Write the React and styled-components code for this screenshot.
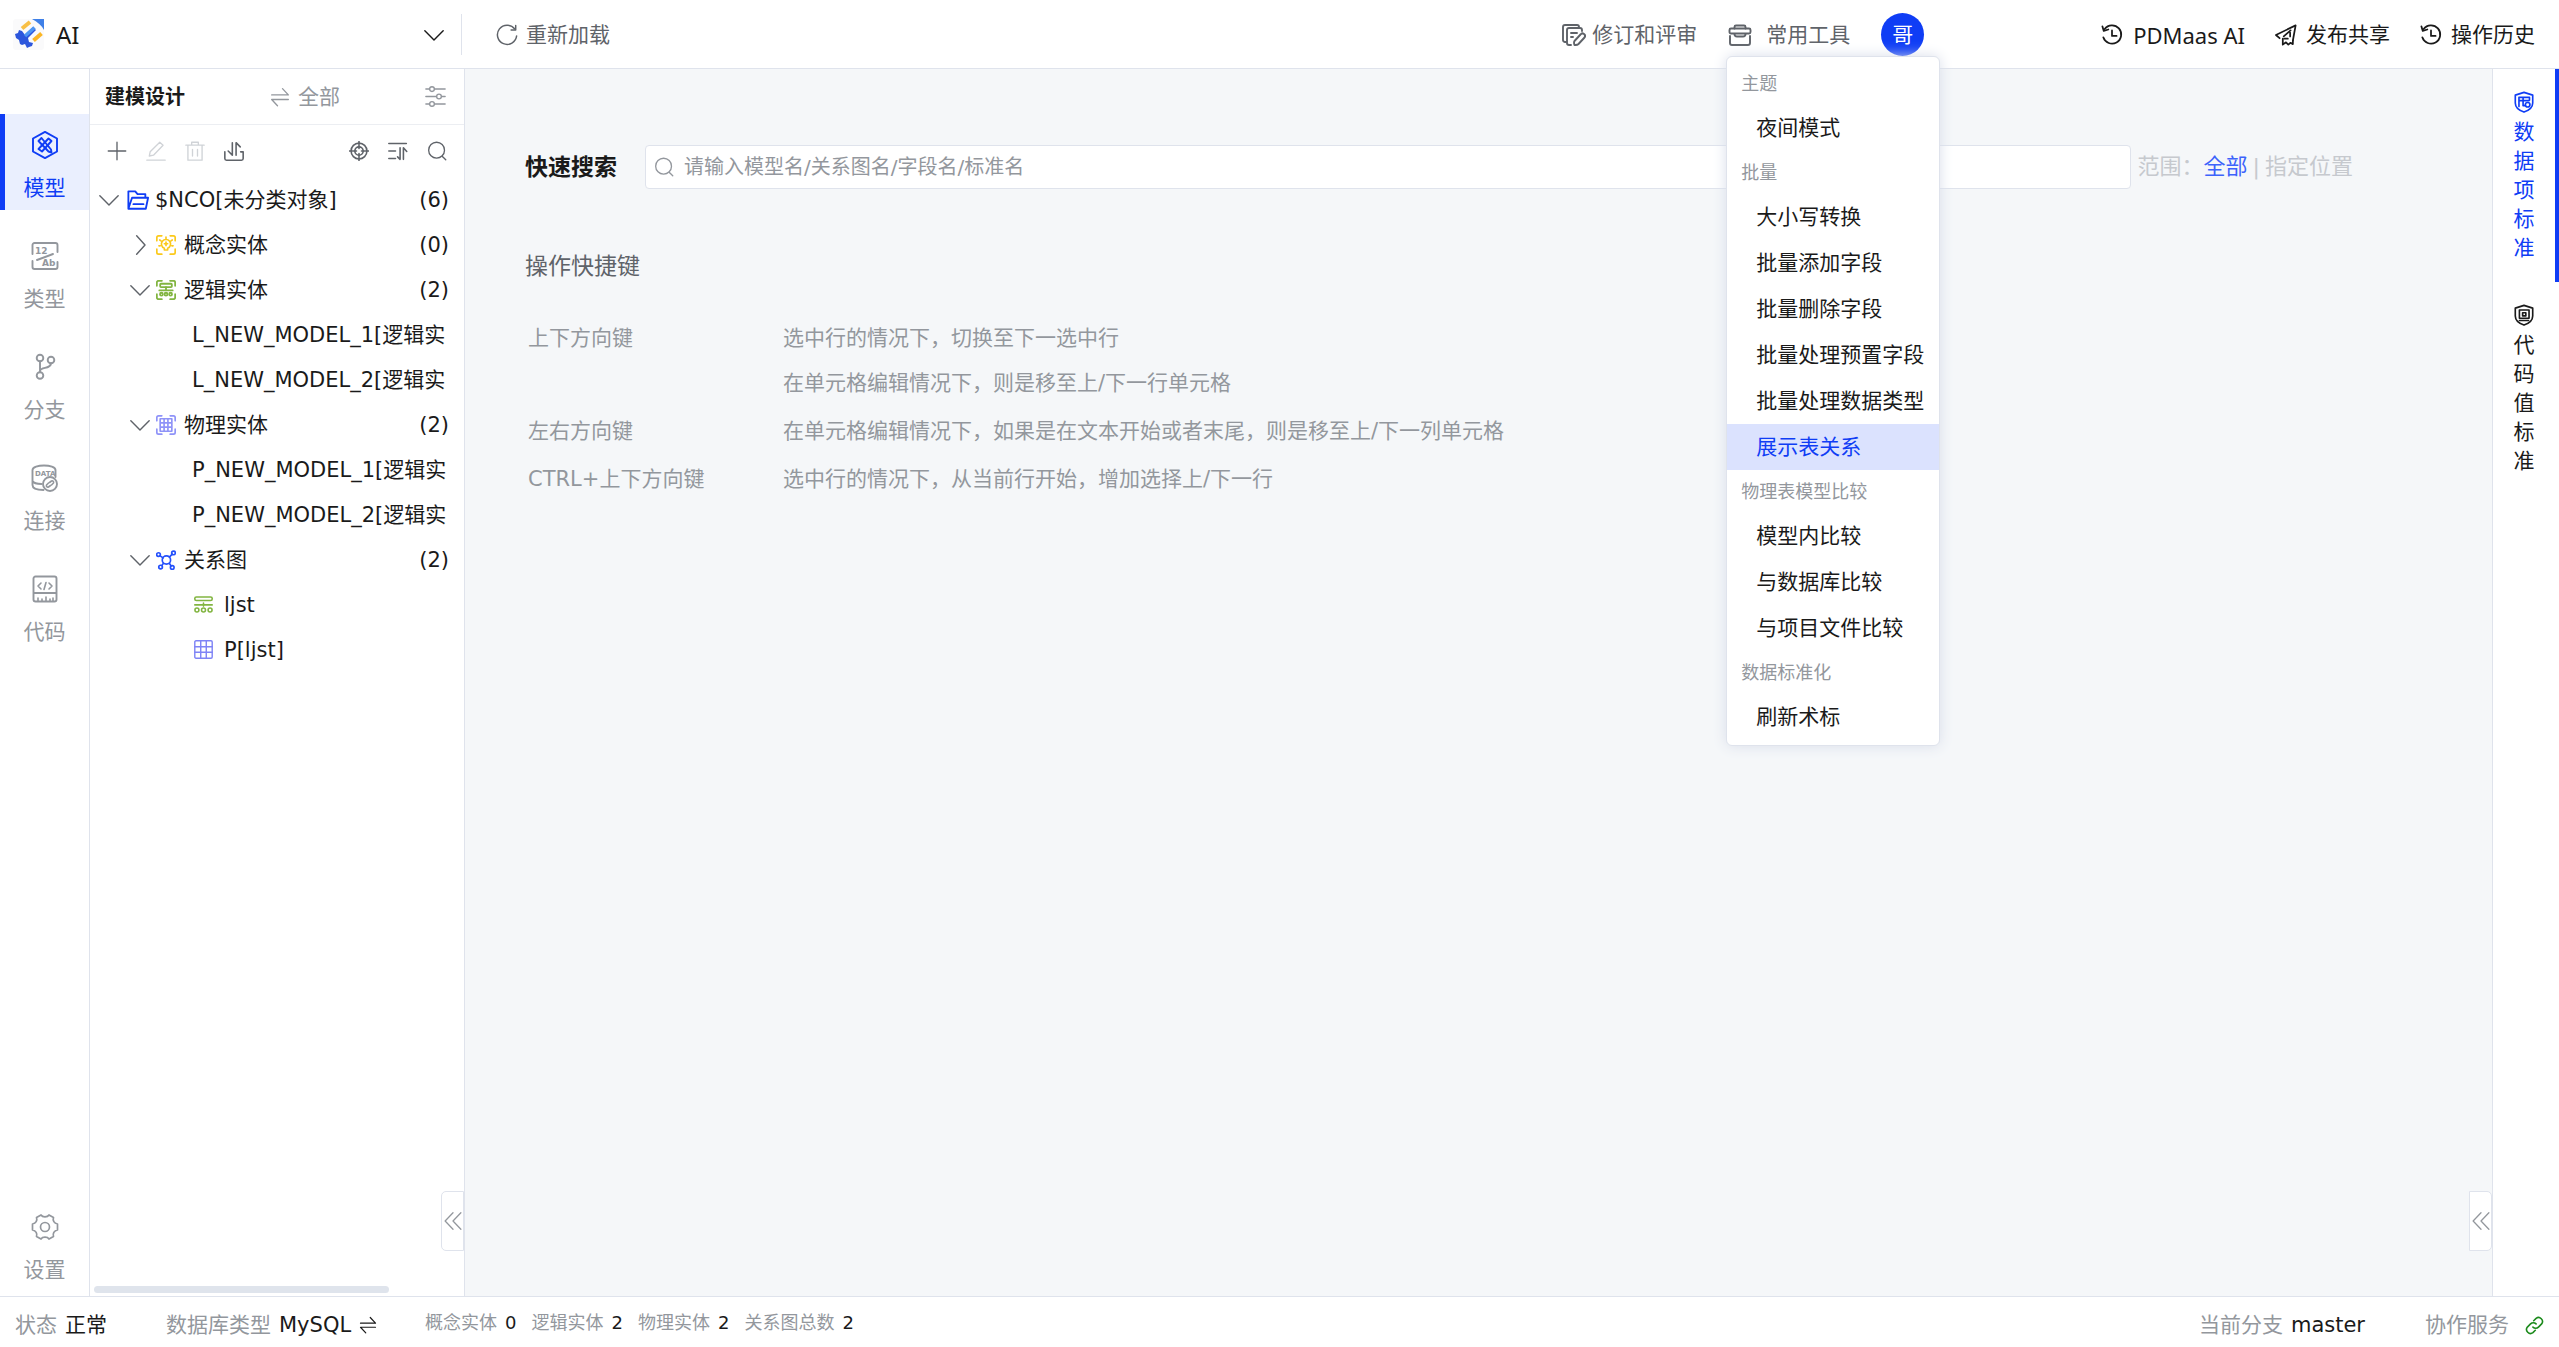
import { useState } from "react"
import styled, { createGlobalStyle } from "styled-components"

const BLUE = "#0f3df5"
const LINE = "#dfe3ec"
const GREY = "#93979d"
const DARK = "#5f6369"
const INK = "#1a1a1a"

const GlobalStyle = createGlobalStyle`
    * {
        box-sizing: border-box;
    }
    body {
        margin: 0;
        color: ${INK};
        font-family: "DejaVu Sans", "Noto Sans CJK SC", sans-serif;
        font-size: 21px;
        line-height: 28px;
    }
    button, input {
        font: inherit;
        color: inherit;
    }
    button {
        padding: 0;
        border: 0;
        background: none;
        white-space: nowrap;
        cursor: pointer;
    }
    svg {
        display: block;
        flex: none;
    }
`

const Page = styled.div`
    min-height: 100vh;
    display: flex;
    flex-direction: column;
    background-color: white;
`

/* ---------- header ---------- */

const Header = styled.header`
    display: flex;
    align-items: center;
    height: 69px;
    padding: 1px 24px 0 0;
    border-bottom: 1px solid ${LINE};
`

const Project = styled.button`
    display: flex;
    align-items: center;
    gap: 12px;
    width: 462px;
    height: 41px;
    padding: 0 17px 0 13px;
    border-right: 1px solid ${LINE};
    font-family: "Noto Sans", sans-serif;
    font-size: 24px;
`

const ProjectName = styled.span`
    flex: 1;
    text-align: left;
`

const Action = styled.button`
    display: flex;
    align-items: center;
    gap: ${p => p.$gap || 8}px;
    color: ${p => p.$color || INK};
`

const LatinText = styled.span`
    font-family: "Noto Sans", sans-serif;
    font-size: 22px;
`

const Reload = styled.div`
    flex: 1;
    padding-left: 34px;
`

const HeaderTools = styled.div`
    display: flex;
    align-items: center;
    gap: 31px;
    margin-right: 177px;
`

const HeaderLinks = styled.div`
    display: flex;
    align-items: center;
    gap: 30px;
`

const Avatar = styled.button`
    width: 43px;
    height: 43px;
    border-radius: 50%;
    background-color: ${BLUE};
    color: white;
`

const MenuAnchor = styled.div`
    position: relative;
`

const Menu = styled.div`
    position: absolute;
    top: 35px;
    left: -2px;
    z-index: 10;
    width: 214px;
    padding: 5px 0;
    border: 1px solid ${LINE};
    border-radius: 6px;
    background-color: white;
    box-shadow: 0 0 14px #d9deea;
`

const MenuTitle = styled.div`
    padding-left: 14px;
    font-size: 18px;
    line-height: 43px;
    color: ${GREY};
`

const MenuItem = styled.button`
    display: block;
    width: 100%;
    padding-left: 29px;
    text-align: left;
    line-height: 46px;
    color: ${p => (p.$active ? BLUE : INK)};
    background-color: ${p => (p.$active ? "#dbe2fe" : "transparent")};
`

/* ---------- body ---------- */

const Body = styled.div`
    flex: 1;
    display: flex;
`

const Rail = styled.nav`
    display: flex;
    flex-direction: column;
    gap: 15px;
    width: 90px;
    padding: 45px 0 4px;
    border-right: 1px solid ${LINE};
`

const RailItem = styled.button`
    display: flex;
    flex-direction: column;
    align-items: center;
    gap: 15px;
    height: 96px;
    padding: 17px 5px 0 0;
    border-left: 5px solid ${p => (p.$active ? BLUE : "transparent")};
    background-color: ${p => (p.$active ? "#eaeffe" : "transparent")};
    color: ${p => (p.$active ? BLUE : GREY)};
`

const RailSpacer = styled.div`
    flex: 1;
`

const TreePanel = styled.aside`
    position: relative;
    display: flex;
    flex-direction: column;
    width: 375px;
    border-right: 1px solid ${LINE};
`

const PanelHead = styled.div`
    display: flex;
    align-items: center;
    justify-content: space-between;
    height: 56px;
    padding: 0 18px 0 15px;
    border-bottom: 1px solid #eceef2;
    color: ${GREY};
`

const PanelTitle = styled.h2`
    margin: 0;
    font-size: 20px;
    font-weight: 700;
    color: ${INK};
`

const Toolbar = styled.div`
    display: flex;
    align-items: center;
    gap: 19px;
    height: 52px;
    padding: 0 17px;
    color: ${DARK};
`

const ToolButton = styled.button`
    color: ${p => (p.disabled ? "#d0d3d7" : "inherit")};
    margin-left: ${p => (p.$push ? "auto" : 0)};
`

const Tree = styled.ul`
    flex: 1;
    margin: 0;
    padding: 0 15px 0 0;
    list-style: none;
`

const TreeRow = styled.li`
    display: flex;
    align-items: center;
    height: 45px;
    padding-left: ${p => p.$indent}px;
`

const Arrow = styled.button`
    margin-right: ${p => (p.$root ? 8 : 6)}px;
    color: ${DARK};
`

const TreeName = styled.span`
    flex: 1;
    white-space: nowrap;
    margin-left: ${p => p.$gap}px;
`

const ScrollThumb = styled.div`
    width: 79%;
    height: 7px;
    margin: 0 4px 3px;
    border-radius: 4px;
    background-color: #dfe4ec;
`

const Handle = styled.button`
    position: absolute;
    right: 0;
    bottom: 45px;
    display: flex;
    align-items: center;
    justify-content: center;
    width: 23px;
    height: 60px;
    border: 1px solid ${LINE};
    border-radius: ${p => (p.$flip ? "0 5px 5px 0" : "5px 0 0 5px")};
    background-color: white;
    color: ${GREY};
`

const Main = styled.main`
    position: relative;
    flex: 1;
    padding: 76px 139px 0 60px;
    background-color: #f5f7f9;
`

const SearchRow = styled.div`
    display: flex;
    align-items: center;
    font-size: 23px;
`

const SearchLabel = styled.label`
    width: 120px;
    font-weight: 700;
`

const SearchBox = styled.div`
    flex: 1;
    display: flex;
    align-items: center;
    gap: 10px;
    height: 44px;
    padding: 0 8px;
    border: 1px solid ${LINE};
    border-radius: 4px;
    background-color: white;
    color: ${GREY};
`

const SearchInput = styled.input`
    flex: 1;
    padding: 0;
    border: 0;
    outline: 0;
    background: none;
    font-size: 20px;
    &::placeholder {
        color: ${GREY};
    }
`

const Scope = styled.div`
    display: flex;
    align-items: center;
    padding-left: 7px;
    font-size: 22px;
    color: #c6c9ce;
`

const ScopeDivider = styled.span`
    padding: 0 5px;
`

const ScopeButton = styled.button`
    color: ${p => (p.$active ? "#3d63fb" : "inherit")};
`

const HelpTitle = styled.h3`
    margin: 61px 0 31px;
    font-size: 23px;
    font-weight: 400;
    line-height: 32px;
    color: ${DARK};
`

const HelpTable = styled.table`
    border-spacing: 3px;
    color: ${GREY};
    line-height: 45px;
    th, td {
        padding: 0;
        font-weight: 400;
        text-align: left;
        vertical-align: top;
    }
    th {
        width: 252px;
    }
`

const SideTabs = styled.nav`
    width: 67px;
    border-left: 1px solid ${LINE};
`

const SideTab = styled.button`
    display: flex;
    flex-direction: column;
    align-items: center;
    gap: 5px;
    width: 100%;
    height: 213px;
    padding-top: 22px;
    border-right: 4px solid ${p => (p.$active ? BLUE : "transparent")};
    color: ${p => (p.$active ? BLUE : INK)};
`

const Vertical = styled.span`
    width: 21px;
    line-height: 29px;
    white-space: normal;
    word-break: break-all;
`

/* ---------- footer ---------- */

const Footer = styled.footer`
    display: flex;
    align-items: center;
    height: 51px;
    padding: 6px 15px 0;
    border-top: 1px solid ${LINE};
`

const Stat = styled.span`
    display: flex;
    align-items: center;
    gap: 8px;
    margin-right: ${p => p.$after}px;
    color: ${GREY};
    b {
        font-weight: 400;
        color: ${INK};
    }
`

const SmallStats = styled.div`
    display: flex;
    flex: 1;
    padding-bottom: 5px;
    font-size: 18px;
`

/* ---------- icons ---------- */

function Icon({ size = 22, w = 1.6, box = 24, children, ...rest }) {
    return (
        <svg width={size} height={size} viewBox={`0 0 ${box} ${box}`} fill="none" stroke="currentColor"
            strokeWidth={w} strokeLinecap="round" strokeLinejoin="round" aria-hidden="true" {...rest}>
            {children}
        </svg>
    )
}

const Logo = () => (
    <svg width="31" height="31" viewBox="0 0 31 31" aria-hidden="true">
        <rect width="31" height="31" rx="3" fill="#fafafb" />
        <path d="M19 0h12v11c-2-4-6-8-12-11z" fill="#3f80e8" />
        <path d="M9 9.500l8-6.500" stroke="#f8bf45" strokeWidth="4" />
        <path d="M2 15l3-1 1-3 3 1 3 4 8-8 3 3-8 8 1 4 4 1-1 3-3 1-2 1-2-4-3 1-2-1-1-4-3-2z" fill="#2c56dc" />
        <path d="M12 17l9.500-8.500" stroke="#4c95f3" strokeWidth="3.500" />
        <path d="M20.500 21.500l8-7" stroke="#fbb624" strokeWidth="4" />
    </svg>
)

const ChevronDown = ({ size = 20 }) => (
    <Icon size={size} w={1.7}><path d="M1 7l11 11L23 7" /></Icon>
)
const ChevronRight = () => (
    <Icon size={20} w={1.7}><path d="M8 1l10 11L8 23" /></Icon>
)
const ReloadIcon = () => (
    <Icon><path d="M20.500 5.500A10.500 10.500 0 1 0 22.500 13" /><path d="M21.500 1.500v5h-5" /></Icon>
)
const ReviewIcon = () => (
    <Icon size={24} w={1.900}>
        <path d="M4 19H3a2 2 0 0 1-2-2V4a2 2 0 0 1 2-2h12a2 2 0 0 1 2 2" />
        <path d="M9 22H7a2 2 0 0 1-2-2V7a2 2 0 0 1 2-2h11a2 2 0 0 1 2 2v1" />
        <path d="M9 10h6M9 14h2" />
        <path d="M12.500 18l6-6.500a2.300 2.300 0 0 1 4 3l-6 6.500c-1.500 1.500-3.500 1-4 1-.300-1-1-2.500 0-4z" />
    </Icon>
)
const ToolboxIcon = () => (
    <Icon size={24} w={1.900}>
        <path d="M6.500 5.500V4a1.500 1.500 0 0 1 1.500-1.500h8A1.500 1.500 0 0 1 17.500 4v1.500" />
        <rect x="1.500" y="5.500" width="21" height="5" rx="1.500" />
        <path d="M2 13v7a2 2 0 0 0 2 2h16a2 2 0 0 0 2-2v-7" />
        <path d="M6.500 11c0 2 1 2.500 2.500 2.500h6c1.500 0 2.500-.500 2.500-2.500" />
    </Icon>
)
const HistoryIcon = () => (
    <Icon w={1.900}>
        <path d="M4 5.500a10 10 0 1 1-1.500 9" /><path d="M1.500 2.500l1.500 5 5-1.500" /><path d="M12 7v6h5" />
    </Icon>
)
const PlaneIcon = () => (
    <Icon w={1.900}>
        <path d="M5 15.500l-4-3.500L22.500 1.500 19.500 18" />
        <path d="M8.500 16v6.500l3.500-2.500 2.500 2.500 2.500-2 2.500 1.500v-4" />
        <path d="M17 7l-7.500 6.500M16.500 9.500v4M10 16h4" />
    </Icon>
)
const SwapIcon = ({ size = 20 }) => (
    <Icon size={size}><path d="M2 9.500h20L15 2" /><path d="M22 15H2l7 7.500" /></Icon>
)
const SlidersIcon = () => (
    <Icon size={21}>
        <path d="M1 3.500h4M11 3.500h12M1 12h12M19 12h4M1 20.500h4M11 20.500h12" />
        <circle cx="8" cy="3.500" r="2.700" /><circle cx="16" cy="12" r="2.700" /><circle cx="8" cy="20.500" r="2.700" />
    </Icon>
)
const PlusIcon = () => <Icon size={20}><path d="M12 1.500v21M1.500 12h21" /></Icon>
const EditIcon = () => (
    <Icon size={20}><path d="M1 23h22" /><path d="M4 18l1-5L16.500 1.500l4 3.500L9 17z" /></Icon>
)
const TrashIcon = () => (
    <Icon size={20}>
        <path d="M1 5h22M8 5V1.500h8V5M3.500 5v18h17V5M9 10v8M15 10v8" />
    </Icon>
)
const ImportIcon = () => (
    <Icon size={20} w={1.900}>
        <path d="M1 13v8a2 2 0 0 0 2 2h18a2 2 0 0 0 2-2v-8h-3" /><path d="M10 2v15l-5-5M14.500 17V2l5 5" />
    </Icon>
)
const TargetIcon = () => (
    <Icon size={20} w={1.900}>
        <circle cx="12" cy="12" r="9.500" /><circle cx="12" cy="12" r="5" />
        <path d="M12 .500V9M12 15v8.500M.500 12H9M15 12h8.500" />
    </Icon>
)
const SortIcon = () => (
    <Icon size={20} w={1.900}>
        <path d="M1 3h21M1 12h8M1 21h8" /><path d="M14.500 8v14l-3-3M18.500 22V8l4 4.500" />
    </Icon>
)
const SearchIcon = () => (
    <Icon size={20}><circle cx="11.500" cy="11" r="9.500" /><path d="M18.500 18.500l4 4" /></Icon>
)
const DoubleLeft = () => (
    <Icon size={18} w={1.700}><path d="M12 1L1.500 12 12 23M22.500 1L12 12l10.500 11" /></Icon>
)
const LinkIcon = () => (
    <Icon size={19} w={2} color="#1c8a1c">
        <path d="M10 14a5 5 0 0 0 7 0l4-4a5 5 0 0 0-7-7l-3 3" />
        <path d="M14 10a5 5 0 0 0-7 0l-4 4a5 5 0 0 0 7 7l3-3" />
    </Icon>
)
const FolderIcon = () => (
    <Icon size={22} w={2} color={BLUE}>
        <path d="M1.500 21.500V2.500h7.500l2.500 3h8.500v4M1.500 21.500l4-12h17.500l-2.500 12z" /><path d="M7 16.500h11" />
    </Icon>
)

// four corner brackets shared by the entity icons
const Corners = () => (
    <path d="M1 7V3a2 2 0 0 1 2-2h4M17 1h4a2 2 0 0 1 2 2v4M23 17v4a2 2 0 0 1-2 2h-4M7 23H3a2 2 0 0 1-2-2v-4" />
)
const ConceptIcon = () => (
    <Icon size={20} w={2} color="#fbc91b">
        <Corners /><path d="M10 18v-2a5.500 5.500 0 1 1 4 0v2zM12 2.500v2M4.500 6l1.500 1M19.500 6L18 7M12 8.500v4M10 10.500h4M3.500 13h1.500M19 13h1.500" />
    </Icon>
)
const LogicIcon = () => (
    <Icon size={20} w={2.200} color="#82b541">
        <Corners /><rect x="5" y="4.500" width="14" height="4" rx="1" /><path d="M12 8.500v4M4 12.500h16" />
        <circle cx="6.500" cy="17" r="1.700" /><circle cx="12" cy="17" r="1.700" /><circle cx="17.500" cy="17" r="1.700" />
    </Icon>
)
const PhysicIcon = () => (
    <Icon size={20} w={2} color="#8f93f8">
        <Corners /><path d="M5 4.500h14v15H5zM5 9.500h14M5 14.500h14M9.700 4.500v15M14.300 4.500v15" />
    </Icon>
)
const GraphIcon = () => (
    <Icon size={20} w={2} color="#2450fb">
        <circle cx="12.500" cy="12" r="5" />
        <circle cx="3" cy="5.500" r="2.200" /><circle cx="21" cy="3.500" r="2.200" />
        <circle cx="5.500" cy="20.500" r="2.200" /><circle cx="19.500" cy="21" r="2.200" />
        <path d="M5 7l3.500 2.500M19.500 5l-3.500 3.500M7 18.500l2-2.500M18 19l-2-3" />
    </Icon>
)
const DiagramIcon = () => (
    <Icon size={19} w={2} color="#82b541">
        <rect x="1" y="2.500" width="22" height="4.500" rx="2" /><path d="M1 12.500h22M12 10v4" />
        <circle cx="3.700" cy="19" r="2.500" /><circle cx="12" cy="19" r="2.500" /><circle cx="20.300" cy="19" r="2.500" />
    </Icon>
)
const GridIcon = () => (
    <Icon size={19} w={1.800} color="#7f84f6">
        <rect x="1" y="1" width="22" height="22" rx="1.500" /><path d="M1 8.500h22M1 15.500h22M8.500 1v22M15.500 1v22" />
    </Icon>
)

const ModelIcon = () => (
    <Icon size={28} box={28} w={1.900}>
        <path d="M14 .900l12 6.600v13L14 27.100 2 20.500v-13z" />
        <path d="M7.500 10l3-3 9.500 11.500.500 3-3-1z" /><path d="M17.500 7.500l3 2.500L11 20.500l-3.500-2.500z" />
    </Icon>
)
const TypeIcon = () => (
    <Icon size={28} box={28} w={1.900}>
        <path d="M1.500 12V3a2 2 0 0 1 2-2h21a2 2 0 0 1 2 2v7M1.500 19v6a2 2 0 0 0 2 2h21a2 2 0 0 0 2-2v-5M6 18l16-6" />
        <text x="4" y="12" fontSize="9" fontWeight="700" fill="currentColor" stroke="none">12</text>
        <text x="11" y="24" fontSize="9" fontWeight="700" fill="currentColor" stroke="none">Ab</text>
    </Icon>
)
const BranchIcon = () => (
    <Icon size={28} box={28} w={1.900}>
        <circle cx="9" cy="5" r="3.300" /><circle cx="20" cy="7" r="3.300" /><circle cx="9" cy="22.500" r="3.300" />
        <path d="M9 8.500v10.500M9 18c1-5 10-1 11-7.500" />
    </Icon>
)
const DataIcon = () => (
    <Icon size={28} box={28} w={1.900}>
        <path d="M1.500 6c0-6 23-6 23 0v7M1.500 6v15c0 3 4 5 11 5M1.500 17c1 2 5 3 9 3" />
        <text x="4" y="12" fontSize="7" fontWeight="700" fill="currentColor" stroke="none">DATA</text>
        <circle cx="19" cy="20" r="7" />
        <path d="M17.500 19l-2 2a1.500 1.500 0 0 0 2 2l2-1.500M20.500 21l2-2a1.500 1.500 0 0 0-2-2l-2 1.500" strokeWidth="1.600" />
    </Icon>
)
const CodeIcon = () => (
    <Icon size={28} box={28} w={1.900}>
        <rect x="2.500" y="1.500" width="23" height="25" rx="2" /><path d="M3 18h22" />
        <path d="M10 8l-3 3 3 3M18 8l3 3-3 3M15 7.500l-2 7M7 26v-3M11 26v-2M15 26v-4M19 26v-2M22 26v-3" strokeWidth="1.600" />
    </Icon>
)
const GearIcon = () => (
    <Icon size={28} box={28} w={1.700}>
        <path d="M10 2c1.500 2.500 6.500 2.500 8 0l4.500 2.500c-1 3 .5 6 4 6.500v6c-3.500.500-5 3.500-4 6.500L18 26c-1.500-2.500-6.500-2.500-8 0l-4.500-2.500c1-3-.5-6-4-6.500v-6c3.500-.500 5-3.500 4-6.500z" />
        <circle cx="14" cy="14" r="4.500" />
    </Icon>
)
const ShieldItemIcon = () => (
    <Icon size={22} w={1.800}>
        <path d="M12 1.500l9.500 3V13c0 5-4 8-9.500 10C6.500 21 2.500 18 2.500 13V4.500z" />
        <path d="M6.500 17V7h11.500v3M6.500 10.500h11M11 7v9h2" /><circle cx="16" cy="15" r="2.500" />
    </Icon>
)
const ShieldCodeIcon = () => (
    <Icon size={22} w={1.800}>
        <path d="M12 1.500l9.500 3V13c0 5-4 8-9.500 10C6.500 21 2.500 18 2.500 13V4.500z" />
        <path d="M7 6.500h10.500v9H7zM7 18h10M10.500 9.500h3.500v3.500h-3.500z" />
    </Icon>
)

/* ---------- data ---------- */

const railItems = [
    ["模型", ModelIcon],
    ["类型", TypeIcon],
    ["分支", BranchIcon],
    ["连接", DataIcon],
    ["代码", CodeIcon],
]

const menuGroups = [
    { title: "主题", items: ["夜间模式"] },
    { title: "批量", items: ["大小写转换", "批量添加字段", "批量删除字段", "批量处理预置字段", "批量处理数据类型", "展示表关系"] },
    { title: "物理表模型比较", items: ["模型内比较", "与数据库比较", "与项目文件比较"] },
    { title: "数据标准化", items: ["刷新术标"] },
]

const treeRows = [
    { indent: 9, open: true, icon: FolderIcon, name: "$NCO[未分类对象]", count: 6, gap: 6 },
    { indent: 40, open: false, icon: ConceptIcon, name: "概念实体", count: 0, gap: 8 },
    { indent: 40, open: true, icon: LogicIcon, name: "逻辑实体", count: 2, gap: 8 },
    { indent: 102, name: "L_NEW_MODEL_1[逻辑实", gap: 0 },
    { indent: 102, name: "L_NEW_MODEL_2[逻辑实", gap: 0 },
    { indent: 40, open: true, icon: PhysicIcon, name: "物理实体", count: 2, gap: 8 },
    { indent: 102, name: "P_NEW_MODEL_1[逻辑实", gap: 0 },
    { indent: 102, name: "P_NEW_MODEL_2[逻辑实", gap: 0 },
    { indent: 40, open: true, icon: GraphIcon, name: "关系图", count: 2, gap: 8 },
    { indent: 104, icon: DiagramIcon, name: "ljst", gap: 11 },
    { indent: 104, icon: GridIcon, name: "P[ljst]", gap: 11 },
]

const shortcuts = [
    ["上下方向键", ["选中行的情况下，切换至下一选中行", "在单元格编辑情况下，则是移至上/下一行单元格"]],
    ["左右方向键", ["在单元格编辑情况下，如果是在文本开始或者末尾，则是移至上/下一列单元格"]],
    ["CTRL+上下方向键", ["选中行的情况下，从当前行开始，增加选择上/下一行"]],
]

const counts = [["概念实体", 0], ["逻辑实体", 2], ["物理实体", 2], ["关系图总数", 2]]

function TopBar() {
    const [picked, setPicked] = useState("展示表关系")
    return (
        <Header>
            <Project>
                <Logo />
                <ProjectName>AI</ProjectName>
                <ChevronDown />
            </Project>
            <Reload>
                <Action $color={DARK}><ReloadIcon />重新加载</Action>
            </Reload>
            <HeaderTools>
                <Action $color={DARK} $gap={6}><ReviewIcon />修订和评审</Action>
                <MenuAnchor>
                    <Action $color={DARK} $gap={14}><ToolboxIcon />常用工具</Action>
                    <Menu>
                        {menuGroups.map(group => (
                            <div key={group.title}>
                                <MenuTitle>{group.title}</MenuTitle>
                                {group.items.map(item => (
                                    <MenuItem key={item} $active={item === picked} onClick={() => setPicked(item)}>
                                        {item}
                                    </MenuItem>
                                ))}
                            </div>
                        ))}
                    </Menu>
                </MenuAnchor>
                <Avatar>哥</Avatar>
            </HeaderTools>
            <HeaderLinks>
                <Action $gap={10}><HistoryIcon /><LatinText>PDMaas AI</LatinText></Action>
                <Action $gap={9}><PlaneIcon />发布共享</Action>
                <Action $gap={9}><HistoryIcon />操作历史</Action>
            </HeaderLinks>
        </Header>
    )
}

function SideTree() {
    return (
        <TreePanel>
            <PanelHead>
                <PanelTitle>建模设计</PanelTitle>
                <Action $color={GREY}><SwapIcon />全部</Action>
                <button aria-label="筛选"><SlidersIcon /></button>
            </PanelHead>
            <Toolbar>
                <ToolButton aria-label="新增"><PlusIcon /></ToolButton>
                <ToolButton aria-label="编辑" disabled><EditIcon /></ToolButton>
                <ToolButton aria-label="删除" disabled><TrashIcon /></ToolButton>
                <ToolButton aria-label="导入导出"><ImportIcon /></ToolButton>
                <ToolButton aria-label="定位" $push><TargetIcon /></ToolButton>
                <ToolButton aria-label="排序"><SortIcon /></ToolButton>
                <ToolButton aria-label="搜索"><SearchIcon /></ToolButton>
            </Toolbar>
            <Tree>
                {treeRows.map(row => (
                    <TreeRow key={row.name} $indent={row.indent}>
                        {row.open !== undefined && (
                            <Arrow aria-label="展开" $root={row.count === 6}>
                                {row.open ? <ChevronDown /> : <ChevronRight />}
                            </Arrow>
                        )}
                        {row.icon && <row.icon />}
                        <TreeName $gap={row.gap}>{row.name}</TreeName>
                        {row.count !== undefined && <span>({row.count})</span>}
                    </TreeRow>
                ))}
            </Tree>
            <ScrollThumb />
            <Handle aria-label="收起"><DoubleLeft /></Handle>
        </TreePanel>
    )
}

function Home() {
    return (
        <Main>
            <SearchRow>
                <SearchLabel htmlFor="quick">快速搜索</SearchLabel>
                <SearchBox>
                    <SearchIcon />
                    <SearchInput id="quick" placeholder="请输入模型名/关系图名/字段名/标准名" />
                </SearchBox>
                <Scope>
                    <span>范围：</span>
                    <ScopeButton $active>全部</ScopeButton>
                    <ScopeDivider>|</ScopeDivider>
                    <ScopeButton>指定位置</ScopeButton>
                </Scope>
            </SearchRow>
            <HelpTitle>操作快捷键</HelpTitle>
            <HelpTable>
                <tbody>
                    {shortcuts.map(([keys, lines]) => (
                        <tr key={keys}>
                            <th scope="row">{keys}</th>
                            <td>{lines.map(line => <div key={line}>{line}</div>)}</td>
                        </tr>
                    ))}
                </tbody>
            </HelpTable>
            <Handle aria-label="展开" $flip><DoubleLeft /></Handle>
        </Main>
    )
}

function App() {
    return (
        <Page>
            <GlobalStyle />
            <TopBar />
            <Body>
                <Rail>
                    {railItems.map(([name, RailIcon], i) => (
                        <RailItem key={name} $active={i === 0}><RailIcon />{name}</RailItem>
                    ))}
                    <RailSpacer />
                    <RailItem><GearIcon />设置</RailItem>
                </Rail>
                <SideTree />
                <Home />
                <SideTabs>
                    <SideTab $active><ShieldItemIcon /><Vertical>数据项标准</Vertical></SideTab>
                    <SideTab><ShieldCodeIcon /><Vertical>代码值标准</Vertical></SideTab>
                </SideTabs>
            </Body>
            <Footer>
                <Stat $after={59}>状态<b>正常</b></Stat>
                <Stat $after={48}>数据库类型<b>MySQL</b><b><SwapIcon size={18} /></b></Stat>
                <SmallStats>
                    {counts.map(([name, n]) => (
                        <Stat key={name} $after={15}>{name}<b>{n}</b></Stat>
                    ))}
                </SmallStats>
                <Stat $after={60}>当前分支<b>master</b></Stat>
                <Stat $after={16}>协作服务</Stat>
                <Action aria-label="协作服务"><LinkIcon /></Action>
            </Footer>
        </Page>
    )
}

export default App
